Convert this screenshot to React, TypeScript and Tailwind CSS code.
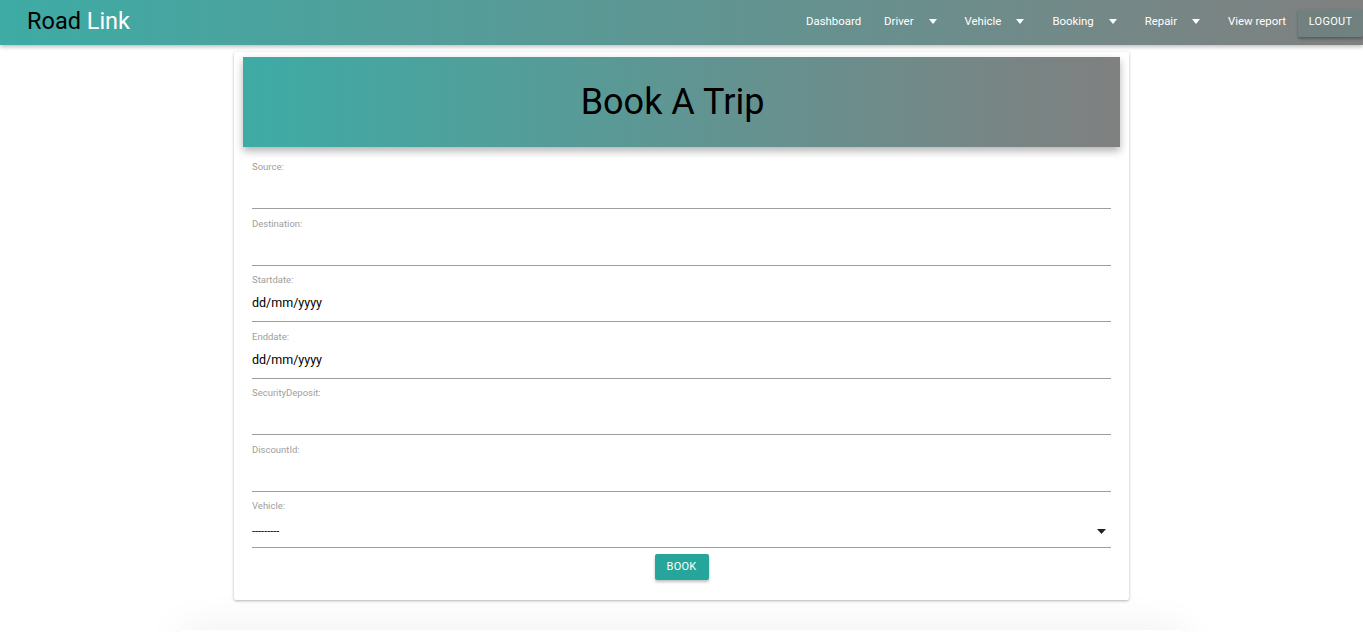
import React from "react";

const Caret = () => (
  <svg width="8" height="5" viewBox="0 0 8 5" className="ml-[15px]">
    <path d="M0 0 L8 0 L4 5 Z" fill="currentColor" />
  </svg>
);

function Navbar() {
  const menus = ["Driver", "Vehicle", "Booking", "Repair"];
  return (
    <nav className="h-[45px] w-full flex items-center bg-[linear-gradient(to_right,#3eaba5,#808080)] shadow-[0_2px_4px_rgba(0,0,0,0.25)] relative z-10">
      <div className="pl-[27px] text-[23.5px] leading-none -mt-[1px]">
        <span className="text-black">Road </span>
        <span className="text-white">Link</span>
      </div>
      <div className="ml-auto flex items-center text-white text-[11.4px] h-full -mt-[2px]">
        <span className="mr-[23px]">Dashboard</span>
        {menus.map((m) => (
          <span key={m} className="flex items-center mr-[28px]">
            {m}
            <Caret />
          </span>
        ))}
        <span className="mr-[12px]">View report</span>
        <button className="h-[28px] w-[65px] mt-[2px] text-[11px] bg-[#71817f] shadow-[0_2px_3px_rgba(0,0,0,0.3)] rounded-[2px] tracking-wide">
          LOGOUT
        </button>
      </div>
    </nav>
  );
}

function Field({ label, value }: { label: string; value?: string }) {
  return (
    <div className="h-[56.5px]">
      <div className="h-[48px] border-b border-[#9e9e9e] flex flex-col">
        <div className="text-[9.5px] leading-[12px] text-[#9e9e9e]">{label}</div>
        <div className="flex-1 flex items-center">
          <span className="text-[12.5px] text-black">{value}</span>
        </div>
      </div>
    </div>
  );
}

export default function App() {
  return (
    <div className="bg-white font-['Roboto',sans-serif] overflow-hidden h-[632px]">
      <Navbar />
      <div className="w-[895px] mx-auto mt-[7px] bg-white rounded-[2px] shadow-[0_1px_3px_rgba(0,0,0,0.3)] px-[9px] pt-[5px] pb-[20px] relative z-[1]">
        <div className="h-[90px] flex items-center justify-center pr-[18px] bg-[linear-gradient(to_right,#3eaba5,#808080)] shadow-[0_4px_8px_rgba(0,0,0,0.3)]">
          <h1 className="text-[36px] text-black leading-none">Book A Trip</h1>
        </div>
        <div className="px-[9px] pt-[14px]">
          <Field label="Source:" />
          <Field label="Destination:" />
          <Field label="Startdate:" value="dd/mm/yyyy" />
          <Field label="Enddate:" value="dd/mm/yyyy" />
          <Field label="SecurityDeposit:" />
          <Field label="DiscountId:" />
          <div className="h-[48px] border-b border-[#9e9e9e] flex flex-col">
            <div className="text-[9.5px] leading-[12px] text-[#9e9e9e]">Vehicle:</div>
            <div className="flex-1 flex items-center justify-between">
              <span className="text-[11px] text-black mt-[5px]">---------</span>
              <svg width="9" height="5" viewBox="0 0 9 5" className="mr-[5px] mt-[3px]">
                <path d="M0 0 L9 0 L4.5 5 Z" fill="#222" />
              </svg>
            </div>
          </div>
          <div className="flex justify-center mt-[6px]">
            <button className="h-[26px] w-[54px] bg-[#26a69a] text-white text-[11px] rounded-[2px] shadow-[0_2px_3px_rgba(0,0,0,0.25)] tracking-wide">
              BOOK
            </button>
          </div>
        </div>
      </div>
      <div className="w-[1000px] h-[200px] mx-auto mt-[30px] shadow-[0_0_40px_rgba(0,0,0,0.07)]"></div>
    </div>
  );
}
